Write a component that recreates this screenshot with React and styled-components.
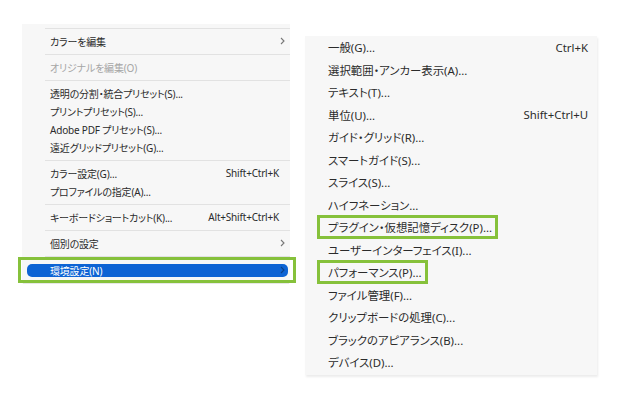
import React from 'react'
import styled, { createGlobalStyle } from 'styled-components'

const GlobalStyle = createGlobalStyle`
  html, body {
    margin: 0;
    padding: 0;
    background: #ffffff;
  }
  body {
    font-family: "Noto Sans", "Noto Sans CJK JP", sans-serif;
    font-feature-settings: "palt";
  }
`

const Page = styled.div`
  width: 620px;
  height: 420px;
  display: flex;
  align-items: flex-start;
  overflow: hidden;
`

const Menu = styled.div`
  width: ${(p) => p.$width}px;
  margin-top: ${(p) => p.$top}px;
  margin-left: ${(p) => p.$left}px;
  background: #f7f7f7;
  display: flex;
  flex-direction: column;
  padding-bottom: ${(p) => p.$padBottom || 0}px;
  box-shadow: ${(p) => p.$shadow};
`

const Row = styled.div`
  position: relative;
  height: ${(p) => p.$height}px;
  display: flex;
  align-items: center;
  justify-content: space-between;
  padding: 0 ${(p) => p.$padRight}px 0 ${(p) => p.$padLeft}px;
  font-size: ${(p) => p.$size}px;
  letter-spacing: ${(p) => p.$tracking || 0}px;
  color: ${(p) => (p.$disabled ? '#a6a6a6' : '#2b2b2b')};
  white-space: nowrap;
`

const Label = styled.span`
  display: inline-flex;
  align-items: center;
  ${(p) =>
    p.$marked &&
    `
    height: 18px;
    margin-left: -11px;
    padding: 0 3px 0 8px;
    border: 3px solid #86c13b;
  `}
`

const Shortcut = styled.span`
  color: #2b2b2b;
`

const Chevron = styled.svg`
  width: 5px;
  height: 8px;
  margin-right: -6px;
  color: ${(p) => p.$color || '#777'};
`

const Separator = styled.div`
  height: 8px;
  display: flex;
  align-items: center;
  padding-left: ${(p) => p.$indent}px;
  &::after {
    content: '';
    flex: 1;
    height: 1px;
    background: #e2e2e2;
  }
`

const ActiveRow = styled.div`
  position: relative;
  height: 20px;
  display: flex;
  align-items: center;
  padding: 0 2px 0 5px;
  &::after {
    content: '';
    position: absolute;
    top: -3px;
    bottom: -3px;
    left: -4px;
    right: -6px;
    border: 3px solid #86c13b;
  }
`

const ActiveBar = styled.div`
  flex: 1;
  height: 13px;
  border-radius: 5px;
  background: #0d63d4;
  color: #ffffff;
  font-size: 10px;
  letter-spacing: -0.2px;
  display: flex;
  align-items: center;
  justify-content: space-between;
  padding: 0 9px 0 23px;
`

const ChevronIcon = ({ color }) => (
  <Chevron $color={color} viewBox="0 0 5 8">
    <path d="M1 1 L4 4 L1 7" fill="none" stroke="currentColor" strokeWidth="1.1" />
  </Chevron>
)

const leftItems = [
  { sep: true },
  { label: 'カラーを編集', sub: true },
  { sep: true },
  { label: 'オリジナルを編集(O)', disabled: true },
  { sep: true },
  { label: '透明の分割・統合プリセット(S)...' },
  { label: 'プリントプリセット(S)...' },
  { label: 'Adobe PDF プリセット(S)...' },
  { label: '遠近グリッドプリセット(G)...' },
  { sep: true },
  { label: 'カラー設定(G)...', key: 'Shift+Ctrl+K' },
  { label: 'プロファイルの指定(A)...' },
  { sep: true },
  { label: 'キーボードショートカット(K)...', key: 'Alt+Shift+Ctrl+K' },
  { sep: true },
  { label: '個別の設定', sub: true },
  { sep: true },
]

const rightItems = [
  { label: '一般(G)...', key: 'Ctrl+K' },
  { label: '選択範囲・アンカー表示(A)...' },
  { label: 'テキスト(T)...' },
  { label: '単位(U)...', key: 'Shift+Ctrl+U' },
  { label: 'ガイド・グリッド(R)...' },
  { label: 'スマートガイド(S)...' },
  { label: 'スライス(S)...' },
  { label: 'ハイフネーション...' },
  { label: 'プラグイン・仮想記憶ディスク(P)...', marked: true },
  { label: 'ユーザーインターフェイス(I)...' },
  { label: 'パフォーマンス(P)...', marked: true },
  { label: 'ファイル管理(F)...' },
  { label: 'クリップボードの処理(C)...' },
  { label: 'ブラックのアピアランス(B)...' },
  { label: 'デバイス(D)...' },
]

export default function App() {
  return (
    <Page>
      <GlobalStyle />
      <Menu
        $width={268}
        $top={24}
        $left={22}
        $padBottom={2}
        $shadow="0 2px 1px -1px rgba(0, 0, 0, 0.55)"
      >
        {leftItems.map((item, i) =>
          item.sep ? (
            <Separator key={i} $indent={23} />
          ) : (
            <Row
              key={i}
              $height={18}
              $size={10}
              $tracking={-0.2}
              $padLeft={28}
              $padRight={11}
              $disabled={item.disabled}
            >
              <Label>{item.label}</Label>
              {item.key && <Shortcut>{item.key}</Shortcut>}
              {item.sub && <ChevronIcon />}
            </Row>
          )
        )}
        <ActiveRow>
          <ActiveBar>
            <span>環境設定(N)</span>
            <ChevronIcon color="#0a3f88" />
          </ActiveBar>
        </ActiveRow>
      </Menu>
      <Menu
        $width={292}
        $top={36}
        $left={15}
        $padBottom={1}
        $shadow="1px 2px 2px rgba(0, 0, 0, 0.08)"
      >
        {rightItems.map((item, i) => (
          <Row key={i} $height={22.5} $size={11.4} $padLeft={23} $padRight={9}>
            <Label $marked={item.marked}>{item.label}</Label>
            {item.key && <Shortcut>{item.key}</Shortcut>}
          </Row>
        ))}
      </Menu>
    </Page>
  )
}
